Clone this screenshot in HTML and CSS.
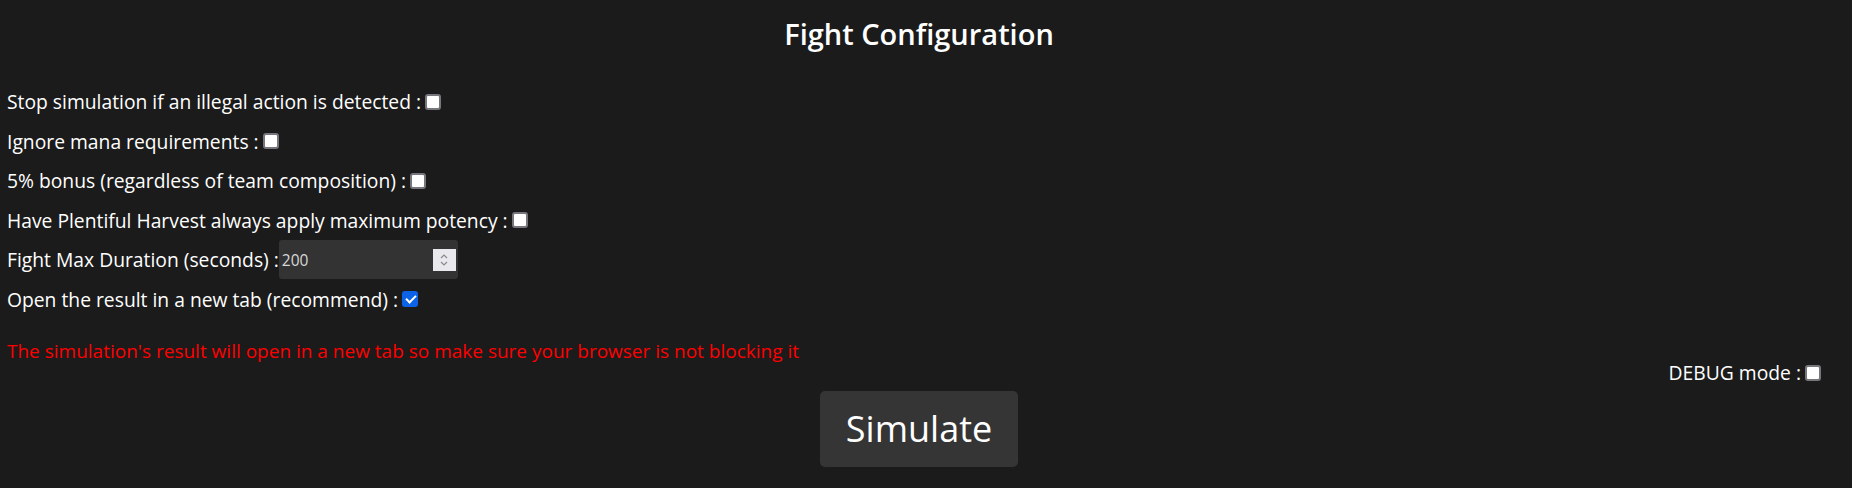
FILE: index.html
```html
<!DOCTYPE html>
<html lang="en">
<head>
<meta charset="utf-8">
<title>Fight Configuration</title>
<link rel="stylesheet" href="styles.css">
</head>
<body>
<main class="page">
  <h1 class="title">Fight Configuration</h1>
  <div class="options">
    <div class="row"><label for="o1">Stop simulation if an illegal action is detected :</label><input class="check" type="checkbox" id="o1"></div>
    <div class="row"><label for="o2">Ignore mana requirements :</label><input class="check" type="checkbox" id="o2"></div>
    <div class="row"><label for="o3">5% bonus (regardless of team composition) :</label><input class="check" type="checkbox" id="o3"></div>
    <div class="row"><label for="o4">Have Plentiful Harvest always apply maximum potency :</label><input class="check" type="checkbox" id="o4"></div>
    <div class="row"><label for="o5">Fight Max Duration (seconds) :</label><span class="number"><input class="number-input" type="number" id="o5" value="200"><span class="spin"><svg width="12" height="18" viewBox="0 0 12 18"><path d="M3 7 L6 4 L9 7" fill="none" stroke="#8a8a8a" stroke-width="1.2"/><path d="M3 11 L6 14 L9 11" fill="none" stroke="#8a8a8a" stroke-width="1.2"/></svg></span></span></div>
    <div class="row"><label for="o6">Open the result in a new tab (recommend) :</label><input class="check" type="checkbox" id="o6" checked></div>
  </div>
  <p class="warning">The simulation's result will open in a new tab so make sure your browser is not blocking it</p>
  <div class="debug"><label for="dbg">DEBUG mode :</label><input class="check" type="checkbox" id="dbg"></div>
  <div class="actions"><button class="simulate" type="button">Simulate</button></div>
</main>
</body>
</html>
```
FILE: styles.css
```css
html, body {
  margin: 0;
  padding: 0;
  background: #1b1b1b;
}
body {
  color: #ffffff;
  font-family: "Open Sans", "Noto Sans", sans-serif;
}
.page {
  padding: 0 21px 0 7px;
}
.title {
  margin: 0 0 14px 0;
  height: 68px;
  line-height: 68px;
  font-size: 29px;
  font-weight: 600;
  text-align: center;
}
.options {
  display: flex;
  flex-direction: column;
}
.row {
  height: 39.5px;
  display: flex;
  align-items: center;
  font-size: 19.3px;
}
.check {
  appearance: none;
  -webkit-appearance: none;
  width: 16px;
  height: 16px;
  margin: 0 0 0 4px;
  background: #ffffff;
  border: 2px solid #76767c;
  border-radius: 3px;
  box-sizing: border-box;
  position: relative;
  flex: none;
}
.check:checked {
  background: #0d63e8;
  border-color: #0d63e8;
}
.check:checked::after {
  content: "";
  position: absolute;
  left: 3.5px;
  top: 0px;
  width: 4px;
  height: 8px;
  border: solid #fff;
  border-width: 0 2.2px 2.2px 0;
  transform: rotate(45deg);
}
.number {
  display: flex;
  align-items: center;
  width: 179px;
  height: 39px;
  background: #333333;
  border-radius: 3px;
  box-sizing: border-box;
  padding: 0 2px 0 3px;
}
.number-input {
  flex: 1;
  min-width: 0;
  background: transparent;
  border: 0;
  outline: none;
  color: #d8d8d8;
  font-family: "Open Sans", sans-serif;
  font-size: 15.5px;
  padding: 0;
  margin: 0;
  -moz-appearance: textfield;
}
.number-input::-webkit-inner-spin-button,
.number-input::-webkit-outer-spin-button {
  -webkit-appearance: none;
  margin: 0;
}
.spin {
  width: 23px;
  height: 22px;
  background: #e9e9ed;
  display: flex;
  align-items: center;
  justify-content: center;
}
.warning {
  margin: 22px 0 0 0;
  height: 21px;
  line-height: 21px;
  font-size: 19px;
  color: #ff0000;
}
.debug {
  display: flex;
  justify-content: flex-end;
  align-items: center;
  height: 21px;
  font-size: 19.3px;
  margin-right: 10px;
}
.actions {
  display: flex;
  justify-content: center;
  margin-top: 7.5px;
}
.simulate {
  width: 198px;
  height: 76px;
  background: #353535;
  color: #ffffff;
  border: 0;
  border-radius: 5px;
  font-family: "Open Sans", sans-serif;
  font-size: 36px;
  padding: 0;
}
```
